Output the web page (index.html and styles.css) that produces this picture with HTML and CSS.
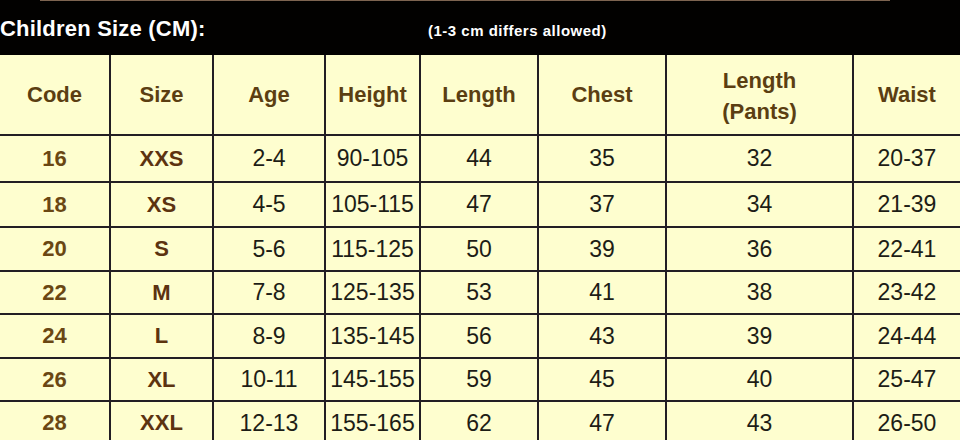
FILE: index.html
```html
<!DOCTYPE html>
<html lang="en">
<head>
<meta charset="utf-8">
<title>Children Size (CM)</title>
<link rel="stylesheet" href="styles.css">
</head>
<body>
<div class="chart">
  <header class="chart-head">
    <div class="head-rule"></div>
    <div class="head-line">
      <h1 class="title">Children Size (CM):</h1>
      <span class="note">(1-3 cm differs allowed)</span>
    </div>
  </header>
  <div class="grid">
    <div class="cell th">Code</div>
    <div class="cell th">Size</div>
    <div class="cell th">Age</div>
    <div class="cell th">Height</div>
    <div class="cell th">Length</div>
    <div class="cell th">Chest</div>
    <div class="cell th two">Length<br>(Pants)</div>
    <div class="cell th">Waist</div>

    <div class="cell code">16</div><div class="cell size">XXS</div><div class="cell">2-4</div><div class="cell">90-105</div><div class="cell">44</div><div class="cell">35</div><div class="cell">32</div><div class="cell">20-37</div>
    <div class="cell code">18</div><div class="cell size">XS</div><div class="cell">4-5</div><div class="cell">105-115</div><div class="cell">47</div><div class="cell">37</div><div class="cell">34</div><div class="cell">21-39</div>
    <div class="cell code">20</div><div class="cell size">S</div><div class="cell">5-6</div><div class="cell">115-125</div><div class="cell">50</div><div class="cell">39</div><div class="cell">36</div><div class="cell">22-41</div>
    <div class="cell code">22</div><div class="cell size">M</div><div class="cell">7-8</div><div class="cell">125-135</div><div class="cell">53</div><div class="cell">41</div><div class="cell">38</div><div class="cell">23-42</div>
    <div class="cell code">24</div><div class="cell size">L</div><div class="cell">8-9</div><div class="cell">135-145</div><div class="cell">56</div><div class="cell">43</div><div class="cell">39</div><div class="cell">24-44</div>
    <div class="cell code">26</div><div class="cell size">XL</div><div class="cell">10-11</div><div class="cell">145-155</div><div class="cell">59</div><div class="cell">45</div><div class="cell">40</div><div class="cell">25-47</div>
    <div class="cell code">28</div><div class="cell size">XXL</div><div class="cell">12-13</div><div class="cell">155-165</div><div class="cell">62</div><div class="cell">47</div><div class="cell">43</div><div class="cell">26-50</div>
  </div>
</div>
</body>
</html>
```
FILE: styles.css
```css
* { box-sizing: border-box; }
html, body {
  margin: 0;
  padding: 0;
  background: #fefecf;
  overflow: hidden;
}
body {
  width: 960px;
  height: 440px;
  font-family: "Liberation Sans", Arial, sans-serif;
}
.chart {
  width: 960px;
  display: flex;
  flex-direction: column;
}
.chart-head {
  background: #020100;
  height: 55px;
  display: flex;
  flex-direction: column;
}
.head-rule {
  height: 1px;
  margin: 0 70px 0 40px;
  background: #7d6450;
}
.head-line {
  flex: 1;
  display: flex;
  align-items: center;
  padding-top: 2px;
}
.title {
  margin: 0;
  width: 428px;
  font-size: 22px;
  font-weight: bold;
  color: #ffffff;
  letter-spacing: 0.2px;
}
.note {
  font-size: 15px;
  font-weight: bold;
  color: #ffffff;
  letter-spacing: 0.5px;
  padding-top: 2px;
}
.grid {
  display: grid;
  grid-template-columns: 109px 101px 110px 93px 116px 126px 185px 106px;
  grid-template-rows: 79px 45px 43px 42px 41px 42px 41px 42px;
  gap: 2px;
  background: #221e24;
}
.cell {
  background: #fefecf;
  display: flex;
  align-items: center;
  justify-content: center;
  text-align: center;
  font-size: 23px;
  color: #1d1d16;
}
.th {
  font-weight: bold;
  font-size: 22px;
  color: #5b3e12;
}
.th.two {
  line-height: 31px;
  padding-top: 2px;
}
.code {
  font-weight: bold;
  font-size: 22px;
  color: #6a4713;
}
.size {
  font-weight: bold;
  font-size: 22px;
  color: #5c3310;
}
```
